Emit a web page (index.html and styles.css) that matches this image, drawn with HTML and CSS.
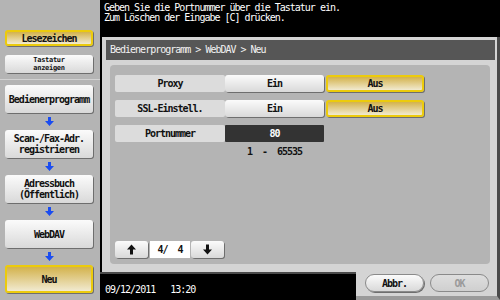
FILE: index.html
```html
<!DOCTYPE html>
<html>
<head>
    <title>WebDAV - Neu</title>
    <link rel="stylesheet" href="styles.css">
</head>
<body>
    <div class="screen">
        <aside class="sidebar">
            <div class="side-top">
                <div class="btn side-btn selected">Lesezeichen</div>
                <div class="btn side-btn small">Tastatur<br>anzeigen</div>
            </div>
            <div class="side-path">
                <div class="btn path-btn">Bedienerprogramm</div>
                <div class="step"><svg width="9" height="9" viewBox="0 0 9 9"><path d="M3 0h3v4h3l-4.5 5-4.5-5h3z" fill="#1a4cf0"/></svg></div>
                <div class="btn path-btn">Scan-/Fax-Adr.<br>registrieren</div>
                <div class="step"><svg width="9" height="9" viewBox="0 0 9 9"><path d="M3 0h3v4h3l-4.5 5-4.5-5h3z" fill="#1a4cf0"/></svg></div>
                <div class="btn path-btn">Adressbuch<br>(Öffentlich)</div>
                <div class="step"><svg width="9" height="9" viewBox="0 0 9 9"><path d="M3 0h3v4h3l-4.5 5-4.5-5h3z" fill="#1a4cf0"/></svg></div>
                <div class="btn path-btn">WebDAV</div>
                <div class="step"><svg width="9" height="9" viewBox="0 0 9 9"><path d="M3 0h3v4h3l-4.5 5-4.5-5h3z" fill="#1a4cf0"/></svg></div>
                <div class="btn path-btn selected">Neu</div>
            </div>
        </aside>

        <main class="main">
            <div class="message">Geben Sie die Portnummer über die Tastatur ein.<br>Zum Löschen der Eingabe [C] drücken.</div>

            <section class="frame">
                <div class="crumbs">Bedienerprogramm &gt; WebDAV &gt; Neu</div>
                <div class="panel">
                    <div class="row">
                        <div class="label">Proxy</div>
                        <div class="btn opt">Ein</div>
                        <div class="btn opt selected">Aus</div>
                    </div>
                    <div class="row">
                        <div class="label">SSL-Einstell.</div>
                        <div class="btn opt">Ein</div>
                        <div class="btn opt selected">Aus</div>
                    </div>
                    <div class="row">
                        <div class="label">Portnummer</div>
                        <div class="value">80</div>
                    </div>
                    <div class="range">1  -  65535</div>

                    <div class="pager">
                        <div class="btn page-btn">
                            <svg width="11" height="11" viewBox="0 0 11 11"><path d="M5.5 0.5 10 5.5H7V10.5H4V5.5H1z" fill="#111"/></svg>
                        </div>
                        <div class="page-num">4/  4</div>
                        <div class="btn page-btn">
                            <svg width="11" height="11" viewBox="0 0 11 11"><path d="M5.5 10.5 10 5.5H7V0.5H4V5.5H1z" fill="#111"/></svg>
                        </div>
                    </div>
                </div>
            </section>

            <footer class="footer">
                <div class="status">
                    <span>09/12/2011</span>
                    <span>13:20</span>
                </div>
                <div class="actions">
                    <div class="btn pill">Abbr.</div>
                    <div class="btn pill disabled">OK</div>
                </div>
            </footer>
        </main>
    </div>
</body>
</html>
```

FILE: styles.css
```css
body {
    margin: 0;
    padding: 0;
    background: #000;
    font-family: "DejaVu Sans Mono", "Liberation Mono", monospace;
    font-size: 10px;
    letter-spacing: -1px;
}

.screen {
    width: 500px;
    height: 300px;
    display: flex;
    overflow: hidden;
}

/* Left column: bookmarks + navigation path */
.sidebar {
    width: 100px;
    flex-shrink: 0;
    background: #b4b4b4;
    display: flex;
    flex-direction: column;
}

.side-top {
    display: flex;
    flex-direction: column;
    gap: 9px;
    padding: 30px 7px 6px 5px;
    border-bottom: 1px solid #d2d2d2;
}

.side-path {
    display: flex;
    flex-direction: column;
    padding: 5px 7px 0 5px;
}

.btn {
    display: flex;
    align-items: center;
    justify-content: center;
    text-align: center;
    font-weight: bold;
    color: #111;
    background: linear-gradient(#fbfbfb, #d9d9d9);
    border-radius: 3px;
    box-shadow: 1px 1px 0 #6e6e6e;
    box-sizing: border-box;
}

.btn.selected {
    background: linear-gradient(#d3b24c, #f1ead0);
    border: 2px solid #eccb0c;
}

.side-btn {
    height: 16px;
}

.side-btn.small {
    height: 18px;
    font-size: 7px;
    line-height: 8px;
    letter-spacing: -0.3px;
}

.path-btn {
    height: 28px;
    line-height: 11px;
}

.step {
    height: 17px;
    display: flex;
    align-items: center;
    justify-content: center;
}

/* Right column */
.main {
    flex: 1;
    display: flex;
    flex-direction: column;
    background: #000;
}

.message {
    height: 37px;
    box-sizing: border-box;
    padding: 3px 4px 0 4px;
    color: #fff;
    line-height: 10px;
}

.frame {
    height: 235px;
    box-sizing: border-box;
    margin-left: 2px;
    padding: 3px 2px 8px 4px;
    background: #d4d4d4;
    border-right: 3px solid #4a4a4a;
    display: flex;
    flex-direction: column;
}

.crumbs {
    height: 20px;
    line-height: 20px;
    padding-left: 4px;
    background: #565656;
    color: #f2f2f2;
}

.panel {
    flex: 1;
    margin: 5px 5px 0 4px;
    padding: 10px 5px 6px 5px;
    background: #b4b4b4;
    border-radius: 4px;
    display: flex;
    flex-direction: column;
}

.row {
    display: flex;
    height: 17px;
    margin-bottom: 8px;
}

.label {
    width: 110px;
    display: flex;
    align-items: center;
    justify-content: center;
    background: #dcdcdc;
    border-radius: 2px;
    font-weight: bold;
    color: #111;
}

.opt {
    width: 99px;
}

.opt + .opt {
    width: 98px;
    margin-left: 2px;
}

.value {
    width: 99px;
    display: flex;
    align-items: center;
    justify-content: center;
    background: #333;
    border-radius: 1px;
    color: #fff;
    font-weight: bold;
}

.range {
    width: 99px;
    margin: -4px 0 0 110px;
    text-align: center;
    white-space: pre;
    font-weight: bold;
    color: #111;
}

.pager {
    margin-top: auto;
    display: flex;
    height: 17px;
}

.page-btn {
    width: 33px;
}

.page-num {
    width: 40px;
    margin: 0 1px 0 2px;
    display: flex;
    align-items: center;
    justify-content: center;
    background: #fff;
    white-space: pre;
    font-weight: bold;
    color: #111;
}

/* Bottom bar */
.footer {
    height: 28px;
    display: flex;
}

.status {
    width: 256px;
    box-sizing: border-box;
    border-top: 2px solid #4a4a4a;
    padding: 4px 0 0 5px;
    display: flex;
    align-items: center;
    gap: 15px;
    color: #fff;
}

.actions {
    flex: 1;
    display: flex;
    gap: 6px;
    padding: 2px 8px 0 9px;
    background: #d4d4d4;
    border-right: 3px solid #4a4a4a;
    border-bottom: 4px solid #9a9a9a;
}

.pill {
    width: 59px;
    height: 18px;
    border-radius: 9px;
    border: 1px solid #8a8a8a;
}

.pill.disabled {
    color: #9a9a9a;
    background: linear-gradient(#dedede, #cfcfcf);
    box-shadow: none;
}
```
